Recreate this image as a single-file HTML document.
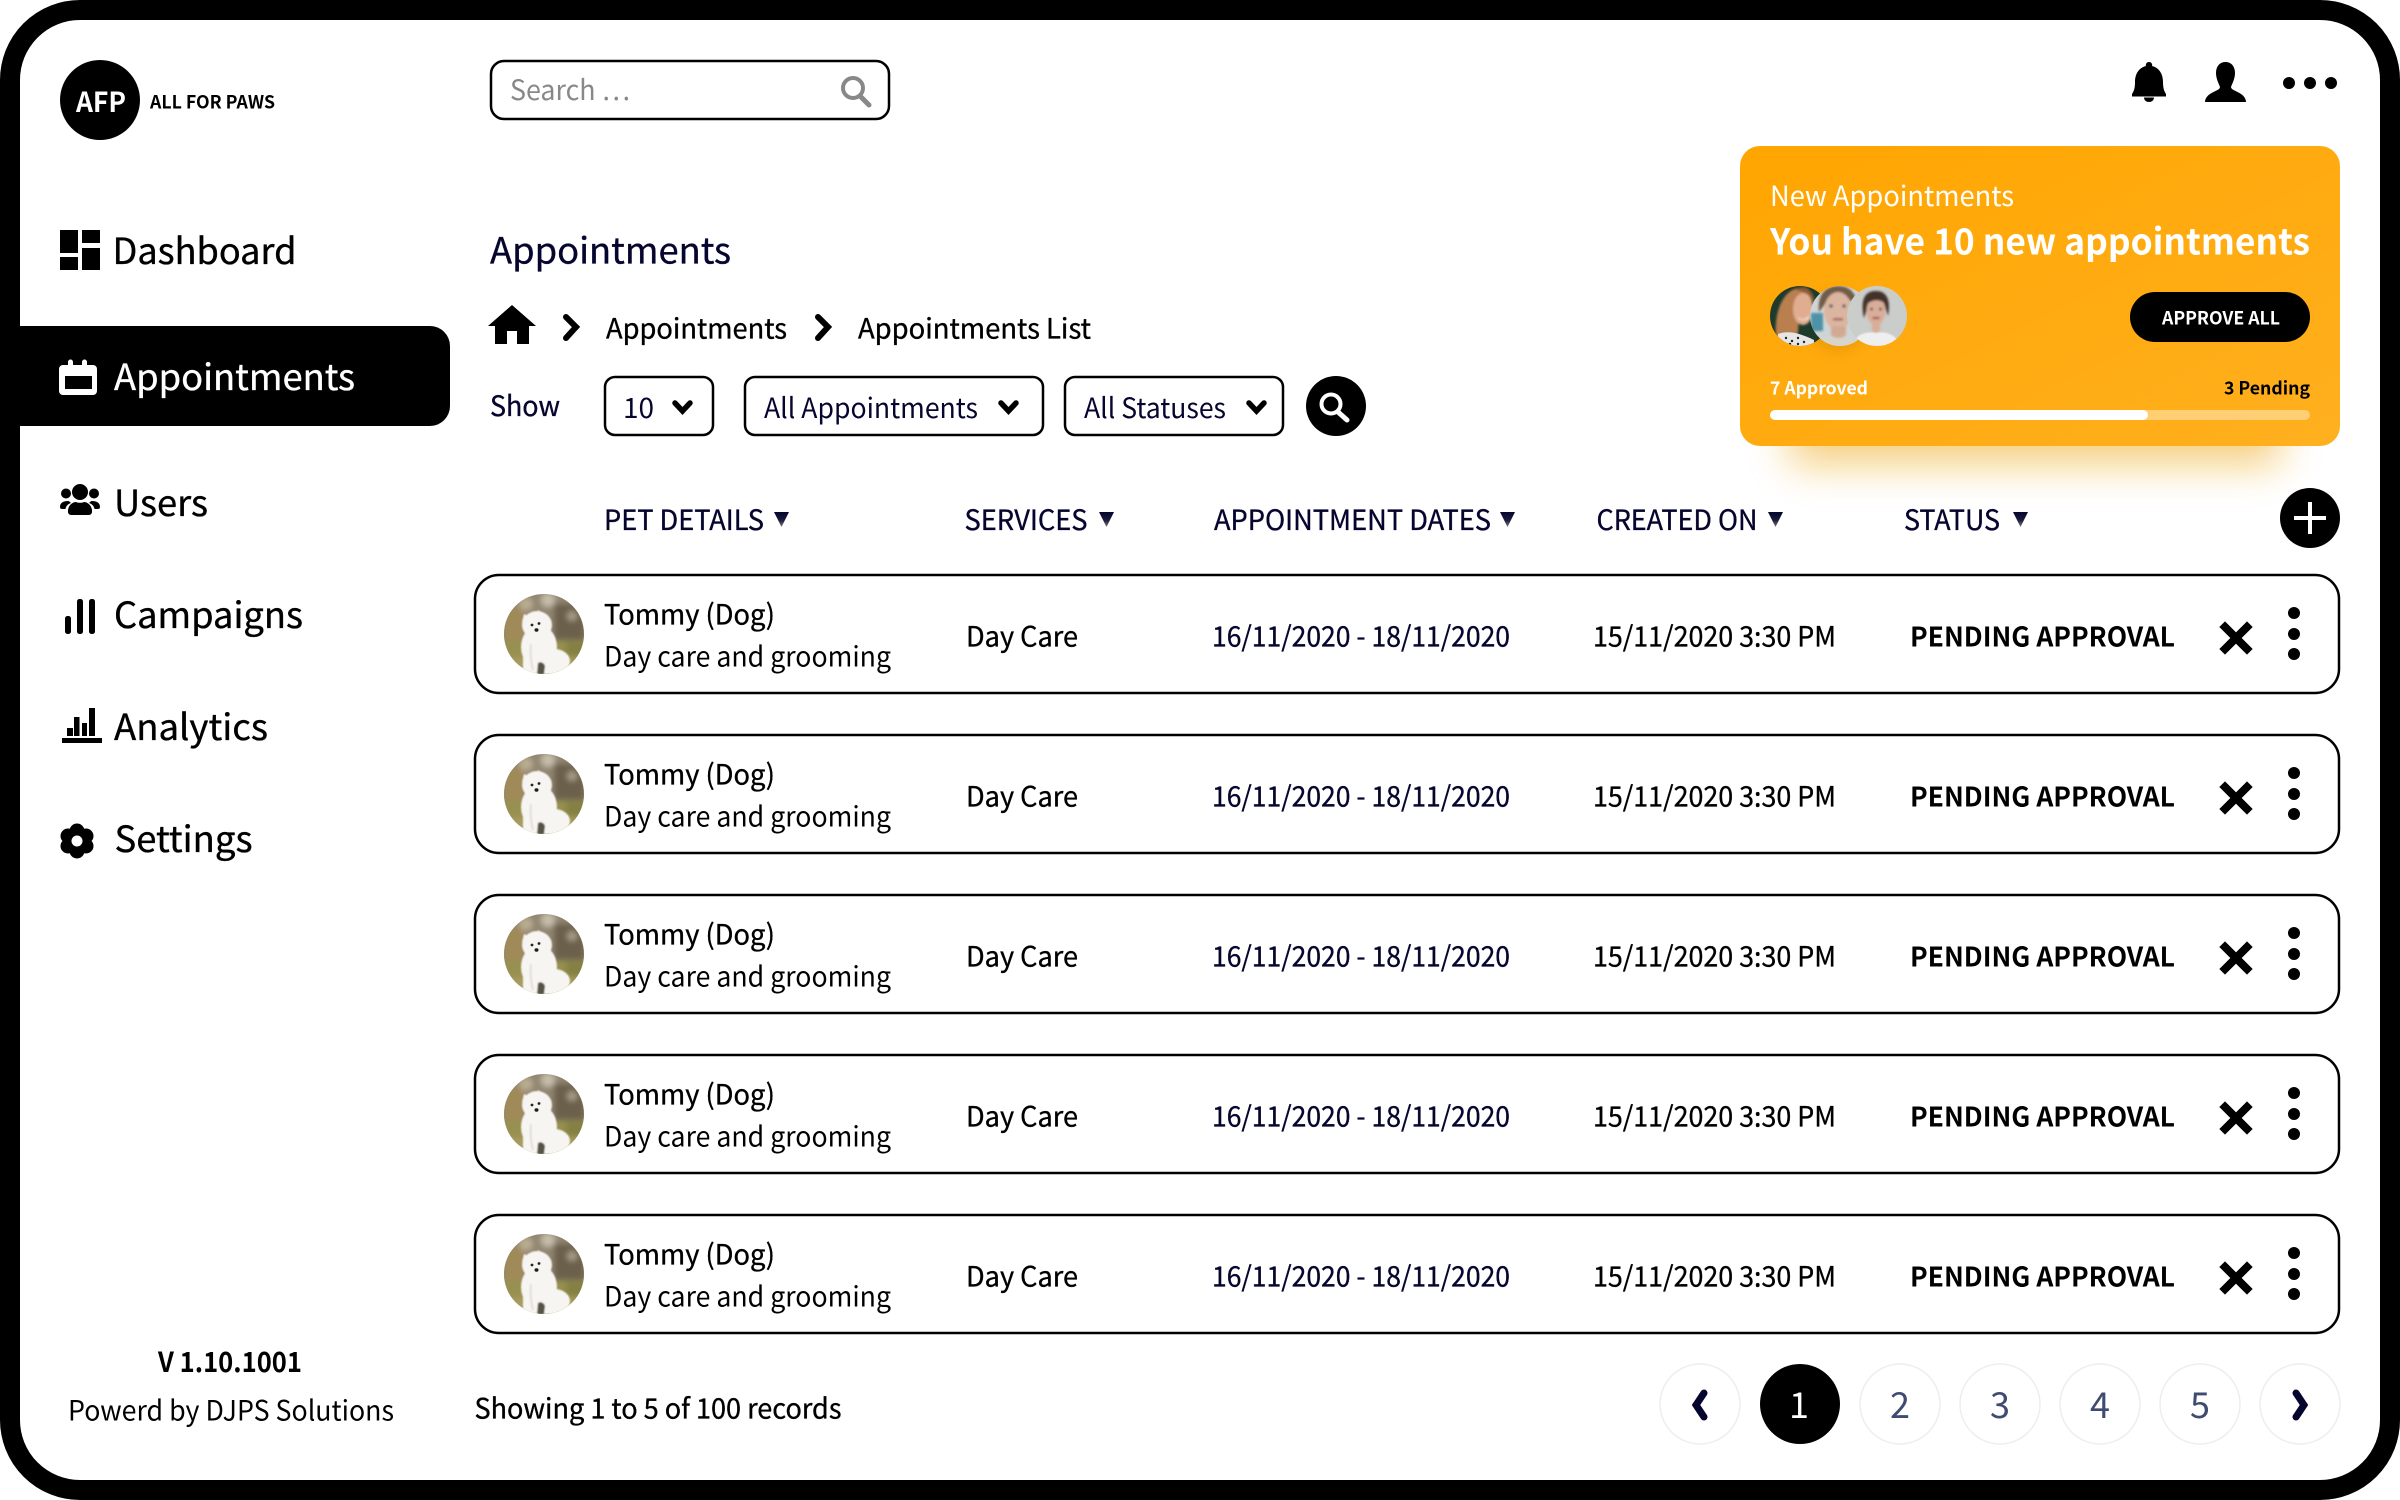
<!DOCTYPE html>
<html><head><meta charset="utf-8"><title>Appointments</title>
<style>
html,body{margin:0;padding:0;background:#fff;width:2400px;height:1500px;overflow:hidden}
svg{display:block}
text{font-family:"Noto Sans CJK JP","Liberation Sans",sans-serif;font-size:28px;white-space:pre}
.n{fill:#05052e}.k{fill:#000}.w{fill:#fff}
.b{font-weight:700}
.h{stroke-width:.35px}
.k.h{stroke:#000}.n.h{stroke:#05052e}.w.h{stroke:#fff}
.s36{font-size:36px}
</style></head><body>
<svg xmlns="http://www.w3.org/2000/svg" width="2400" height="1500" viewBox="0 0 2400 1500">
<defs>
<linearGradient id="card" x1="0" y1="0" x2="1" y2="1"><stop offset="0" stop-color="#ffa500"/><stop offset="1" stop-color="#ffb01f"/></linearGradient>
<linearGradient id="tri" x1="0" y1="0" x2="0" y2="1"><stop offset="0" stop-color="#05052e"/><stop offset=".55" stop-color="#1c1c3c"/><stop offset="1" stop-color="#777"/></linearGradient>
<filter id="b22" x="-30%" y="-50%" width="160%" height="200%"><feGaussianBlur stdDeviation="20"/></filter>
<filter id="b3" x="-30%" y="-30%" width="160%" height="160%"><feGaussianBlur stdDeviation="3"/></filter>
<filter id="b1" x="-30%" y="-30%" width="160%" height="160%"><feGaussianBlur stdDeviation="1.100"/></filter>
<filter id="b05" x="-30%" y="-30%" width="160%" height="160%"><feGaussianBlur stdDeviation=".7"/></filter>
<filter id="ds" x="-40%" y="-40%" width="180%" height="180%"><feGaussianBlur stdDeviation="6"/></filter>
<clipPath id="c80"><circle cx="40" cy="40" r="40"/></clipPath>
<clipPath id="c30"><circle cx="30" cy="30" r="30"/></clipPath>
<g id="dog"><g clip-path="url(#c80)">
<rect width="80" height="80" fill="#8f8568"/>
<g filter="url(#b3)">
<rect width="80" height="46" fill="#918570"/>
<rect x="50" y="10" width="30" height="36" fill="#6a604c"/>
<rect x="0" y="14" width="20" height="34" fill="#a08a58"/>
<circle cx="44" cy="6" r="7" fill="#c6bdab"/><circle cx="22" cy="10" r="7" fill="#b9ab90"/><circle cx="68" cy="22" r="5" fill="#a89f8b"/>
<rect y="47" width="80" height="36" fill="#97914f"/>
<rect x="0" y="64" width="80" height="18" fill="#a89c62"/>
<rect x="62" y="48" width="18" height="14" fill="#84803f"/>
</g>
<g filter="url(#b05)" fill="#f7f5f2">
<ellipse cx="33" cy="31" rx="15" ry="14"/>
<path d="M18 28 L20 20 L27 23Z"/><path d="M30 20 L35 16 L39 24Z"/>
<ellipse cx="35" cy="53" rx="18" ry="22"/>
<ellipse cx="50" cy="67" rx="16" ry="12"/>
<rect x="19" y="60" width="15" height="20"/>
<rect x="38" y="66" width="14" height="14"/>
<path d="M34 69 C37 67 40 69 41 72 L40 80 L33 80Z" fill="#575249"/>
<path d="M27 50 C26 58 27 68 29 76" stroke="#e2ded8" stroke-width="2" fill="none"/>
</g>
<circle cx="28" cy="31" r="1.400" fill="#222"/><circle cx="35" cy="29.500" r="1.400" fill="#222"/><ellipse cx="32.500" cy="36" rx="2" ry="1.700" fill="#1a1a1a"/>
</g></g>
</defs>

<rect width="2400" height="1500" fill="#fff"/>
<rect x="10" y="10" width="2380" height="1480" rx="70" ry="70" fill="#fff" stroke="#000" stroke-width="20"/>

<!-- logo -->
<circle cx="100" cy="100" r="40" fill="#000"/>
<text x="76" y="112" class="w b" textLength="50" lengthAdjust="spacingAndGlyphs">AFP</text>
<text x="150" y="108.500" class="k b" style="font-size:18px" textLength="125" lengthAdjust="spacingAndGlyphs">ALL FOR PAWS</text>

<!-- sidebar -->
<g fill="#000">
<rect x="60" y="230" width="18" height="23"/><rect x="60" y="257" width="18" height="13"/><rect x="82" y="230" width="18" height="13"/><rect x="82" y="248" width="18" height="22"/>
</g>
<text x="112.500" y="264" class="k h s36" textLength="184" lengthAdjust="spacingAndGlyphs">Dashboard</text>

<path d="M20 326 H430 A20 20 0 0 1 450 346 V406 A20 20 0 0 1 430 426 H20Z" fill="#000"/>
<path d="M63 365 H68 V362 A2.500 2.500 0 0 1 73 362 V365 H82 V362 A2.500 2.500 0 0 1 87 362 V365 H93 A4 4 0 0 1 97 369 V391 A4 4 0 0 1 93 395 H63 A4 4 0 0 1 59 391 V369 A4 4 0 0 1 63 365Z M65 376 V389 H92 V376Z" fill="#fff" fill-rule="evenodd"/>
<text x="114" y="390" class="w h s36" textLength="241" lengthAdjust="spacingAndGlyphs">Appointments</text>

<g fill="#000">
<circle cx="80" cy="492" r="8"/><circle cx="66" cy="493.500" r="5"/><circle cx="94" cy="493.500" r="5"/>
<path d="M68 511 C68 505 73 502 76 502 C78 503 82 503 84 502 C87 502 92 505 92 511 V512 A3 3 0 0 1 89 515 H71 A3 3 0 0 1 68 512Z"/>
<path d="M60 507 C60 503 63 501 68 501 C69 501 70 502 71 503 C68 504 66 506 65.500 509 H62 A2 2 0 0 1 60 507Z"/>
<path d="M100 507 C100 503 97 501 92 501 C91 501 90 502 89 503 C92 504 94 506 94.500 509 H98 A2 2 0 0 0 100 507Z"/>
</g>
<text x="114" y="516" class="k h s36" textLength="94" lengthAdjust="spacingAndGlyphs">Users</text>

<g fill="#000"><rect x="65" y="616" width="6" height="18" rx="2.500"/><rect x="77" y="599" width="6" height="35" rx="2.500"/><rect x="89" y="599" width="6" height="35" rx="2.500"/></g>
<text x="114" y="628" class="k h s36" textLength="189" lengthAdjust="spacingAndGlyphs">Campaigns</text>

<g fill="#000"><rect x="62" y="738" width="40" height="5"/><rect x="67" y="728" width="6" height="8"/><rect x="74" y="717" width="5.500" height="19"/><rect x="82" y="723" width="5" height="13"/><rect x="89" y="708" width="6" height="28"/></g>
<text x="114" y="740" class="k h s36" textLength="154" lengthAdjust="spacingAndGlyphs">Analytics</text>

<g fill="#000"><circle cx="77" cy="841" r="13"/><circle cx="77" cy="831" r="7.500"/><circle cx="86" cy="836" r="7.500"/><circle cx="86" cy="846" r="7.500"/><circle cx="77" cy="851" r="7.500"/><circle cx="68" cy="846" r="7.500"/><circle cx="68" cy="836" r="7.500"/></g>
<circle cx="77" cy="841" r="5.500" fill="#fff"/>
<text x="114.500" y="852" class="k h s36" textLength="138" lengthAdjust="spacingAndGlyphs">Settings</text>

<text x="158" y="1372" class="k b" textLength="144" lengthAdjust="spacingAndGlyphs">V 1.10.1001</text>
<text x="68" y="1420.500" class="k" textLength="326" lengthAdjust="spacingAndGlyphs">Powerd by DJPS Solutions</text>

<!-- search -->
<rect x="491" y="61" width="398" height="58" rx="13" fill="#fff" stroke="#000" stroke-width="2.500"/>
<text x="510" y="100" fill="#888" textLength="120" lengthAdjust="spacingAndGlyphs">Search …</text>
<circle cx="853" cy="88" r="10" fill="none" stroke="#888" stroke-width="4"/>
<path d="M860 96 L869 105" stroke="#888" stroke-width="5" stroke-linecap="round"/>

<!-- title -->
<text x="490" y="263.500" class="n h s36" textLength="241" lengthAdjust="spacingAndGlyphs">Appointments</text>
<path d="M512 305 L536 326 H529 V344 H517 V331 H507 V344 H495 V326 H488Z" fill="#000"/>
<path d="M566 317 L576 327 L566 338" fill="none" stroke="#000" stroke-width="6" stroke-linecap="round" stroke-linejoin="miter"/>
<text x="606" y="338.500" class="k h" textLength="181" lengthAdjust="spacingAndGlyphs">Appointments</text>
<path d="M818 317 L828 327 L818 338" fill="none" stroke="#000" stroke-width="6" stroke-linecap="round"/>
<text x="858" y="338.500" class="k h" textLength="233" lengthAdjust="spacingAndGlyphs">Appointments List</text>

<!-- filters -->
<text x="490" y="416" class="n h" textLength="70" lengthAdjust="spacingAndGlyphs">Show</text>
<g fill="#fff" stroke="#000" stroke-width="2.500">
<rect x="605" y="377" width="108" height="58" rx="10"/>
<rect x="745" y="377" width="298" height="58" rx="10"/>
<rect x="1065" y="377" width="218" height="58" rx="10"/>
</g>
<text x="623" y="418" class="n">10</text>
<text x="764" y="418" class="n" textLength="214" lengthAdjust="spacingAndGlyphs">All Appointments</text>
<text x="1084" y="418" class="n" textLength="142" lengthAdjust="spacingAndGlyphs">All Statuses</text>
<g fill="none" stroke="#000" stroke-width="5.500" stroke-linecap="round" stroke-linejoin="miter">
<path d="M675 403 L682.500 411 L690 403"/><path d="M1001 403 L1008.500 411 L1016 403"/><path d="M1249 403 L1256.500 411 L1264 403"/>
</g>
<circle cx="1336" cy="406" r="30" fill="#000"/>
<circle cx="1331" cy="404" r="9.500" fill="none" stroke="#fff" stroke-width="4"/>
<path d="M1338 412 L1347 420" stroke="#fff" stroke-width="5" stroke-linecap="round"/>

<!-- top icons -->
<path d="M2149 62 A3 3 0 0 1 2152 66 C2160 68 2163 75 2163 82 C2163 88 2164 91 2166 94 V96.500 H2132 V94 C2134 91 2135 88 2135 82 C2135 75 2138 68 2146 66 A3 3 0 0 1 2149 62Z M2144 97.500 H2154 C2154 100 2152 102 2149 102 C2146 102 2144 100 2144 97.500Z" fill="#000"/>
<path d="M2225.500 62 C2231 62 2235 66 2235 73 C2235 79 2232 84 2231 87 C2231 90 2237 91 2241 94 C2244 96 2246 99 2246 102 H2205 C2205 99 2207 96 2210 94 C2214 91 2220 90 2220 87 C2219 84 2216 79 2216 73 C2216 66 2220 62 2225.500 62Z" fill="#000"/>
<g fill="#000"><circle cx="2289" cy="83" r="6"/><circle cx="2310" cy="83" r="6"/><circle cx="2331" cy="83" r="6"/></g>

<!-- card -->
<rect x="1790" y="330" width="490" height="134" fill="#eda50f" opacity=".55" filter="url(#b22)"/>
<rect x="1740" y="146" width="600" height="300" rx="20" fill="url(#card)"/>
<text x="1770" y="206" class="w" textLength="244" lengthAdjust="spacingAndGlyphs">New Appointments</text>
<text x="1770" y="254.500" class="w b s36" textLength="540" lengthAdjust="spacingAndGlyphs">You have 10 new appointments</text>
<circle cx="1838" cy="322" r="30" fill="#d98a00" opacity=".45" filter="url(#ds)"/>
<g transform="translate(1770,286)"><g clip-path="url(#c30)">
<rect width="60" height="60" fill="#1d3a2a"/>
<g filter="url(#b1)">
<path d="M7 55 C3 38 8 6 28 2 C38 0 42 5 42 12 L30 20 L28 46 L24 56Z" fill="#b97f4f"/>
<ellipse cx="33" cy="23" rx="10" ry="16" fill="#e0ad90"/>
<path d="M24 3 C34 -1 46 4 44 18 L38 8Z" fill="#8a5a35"/>
<path d="M27 30 Q33 37 40 29 L38 33 Q33 35 29 33Z" fill="#f6eee8"/>
</g>
<path d="M8 48 C18 44 30 47 44 54 L44 60 H8Z" fill="#e6e6e6"/>
<g fill="#222"><circle cx="16" cy="52" r="1.200"/><circle cx="22" cy="55" r="1.200"/><circle cx="28" cy="52" r="1.200"/><circle cx="34" cy="56" r="1.200"/><circle cx="20" cy="58" r="1.200"/><circle cx="28" cy="58" r="1.200"/></g>
</g></g>
<g transform="translate(1810,286)"><g clip-path="url(#c30)">
<rect width="60" height="60" fill="#cfd4d4"/>
<g filter="url(#b1)">
<rect x="1" y="27" width="12" height="18" fill="#4d93a8"/>
<path d="M9 26 C7 6 18 0 28 0 C42 0 48 10 47 24 L40 14 L18 14Z" fill="#6f5c47"/>
<ellipse cx="28" cy="25" rx="14" ry="19" fill="#dcb5a0"/>
<path d="M8 60 C12 48 44 48 48 60Z" fill="#d8d4ca"/>
<path d="M21 40 H36 V49 C32 53 25 53 21 49Z" fill="#d2aa94"/>
<rect x="23" y="32" width="10" height="2.500" fill="#a8675f"/>
<circle cx="21" cy="20" r="1.800" fill="#54606c"/><circle cx="34" cy="20" r="1.800" fill="#54606c"/>
</g>
</g></g>
<g transform="translate(1847,286)"><g clip-path="url(#c30)">
<rect width="60" height="60" fill="#cbcdca"/>
<g filter="url(#b1)">
<path d="M17 32 C12 8 22 5 29 5 C40 5 44 14 41 30 L37 18 L22 18Z" fill="#43322c"/>
<ellipse cx="29" cy="25" rx="9.500" ry="14" fill="#d8ad99"/>
<path d="M20 15 C24 9 35 9 39 18 C33 13 26 13 20 18Z" fill="#43322c"/>
<path d="M25 36 H33 V45 L29 48 L25 45Z" fill="#d8ad99"/>
<rect x="25.500" y="31" width="7" height="2" fill="#a0403f"/>
<circle cx="24.500" cy="23" r="1.300" fill="#333"/><circle cx="33.500" cy="23" r="1.300" fill="#333"/>
</g>
<path d="M5 60 C8 47 22 45 29 47 C36 45 50 47 53 60Z" fill="#efefef" filter="url(#b05)"/>
</g></g>
<rect x="2130" y="292" width="180" height="50" rx="25" fill="#000"/>
<text x="2162" y="324.500" class="w b" style="font-size:18px" textLength="118" lengthAdjust="spacingAndGlyphs">APPROVE ALL</text>
<text x="1770" y="394.500" class="w b" style="font-size:18px" textLength="98" lengthAdjust="spacingAndGlyphs">7 Approved</text>
<text x="2224" y="394.500" class="k b" style="font-size:18px" textLength="86" lengthAdjust="spacingAndGlyphs">3 Pending</text>
<rect x="1770" y="410" width="540" height="10" rx="5" fill="#fff" opacity=".4"/>
<rect x="1770" y="410" width="378" height="10" rx="5" fill="#fff"/>

<!-- header -->
<text x="604" y="530" class="n h" textLength="160" lengthAdjust="spacingAndGlyphs">PET DETAILS</text><polygon points="774,512 789,512 781.500,527" fill="url(#tri)"/>
<text x="964.500" y="530" class="n h" textLength="123" lengthAdjust="spacingAndGlyphs">SERVICES</text><polygon points="1099,512 1114,512 1106.500,527" fill="url(#tri)"/>
<text x="1214" y="530" class="n h" textLength="277" lengthAdjust="spacingAndGlyphs">APPOINTMENT DATES</text><polygon points="1500,512 1515,512 1507.500,527" fill="url(#tri)"/>
<text x="1596.500" y="530" class="n h" textLength="161" lengthAdjust="spacingAndGlyphs">CREATED ON</text><polygon points="1768,512 1783,512 1775.500,527" fill="url(#tri)"/>
<text x="1904" y="530" class="n h" textLength="96" lengthAdjust="spacingAndGlyphs">STATUS</text><polygon points="2013,512 2028,512 2020.500,527" fill="url(#tri)"/>
<circle cx="2310" cy="518" r="30" fill="#000"/>
<path d="M2294 518 H2326 M2310 502 V534" stroke="#fff" stroke-width="4"/>

<!-- rows -->
<g transform="translate(0,0)">
<rect x="475" y="575" width="1864" height="118" rx="24" fill="#fff" stroke="#000" stroke-width="2.500"/>
<use href="#dog" x="504" y="594"/>
<text x="604" y="624.500" class="k h" textLength="171" lengthAdjust="spacingAndGlyphs">Tommy (Dog)</text><text x="604" y="666.500" class="k" textLength="287" lengthAdjust="spacingAndGlyphs">Day care and grooming</text>
<text x="966" y="646.500" class="k h" textLength="112" lengthAdjust="spacingAndGlyphs">Day Care</text><text x="1212" y="646.500" class="n h" textLength="298" lengthAdjust="spacingAndGlyphs">16/11/2020 - 18/11/2020</text><text x="1593" y="646.500" class="k h" textLength="243" lengthAdjust="spacingAndGlyphs">15/11/2020 3:30 PM</text><text x="1910" y="646.500" class="k b" style="font-size:27px" textLength="265" lengthAdjust="spacingAndGlyphs">PENDING APPROVAL</text>
<path d="M2225 627 L2247 649 M2247 627 L2225 649" stroke="#000" stroke-width="8" stroke-linecap="square"/>
<circle cx="2294" cy="613" r="6"/><circle cx="2294" cy="634" r="6"/><circle cx="2294" cy="654" r="6"/>
</g>
<g transform="translate(0,160)">
<rect x="475" y="575" width="1864" height="118" rx="24" fill="#fff" stroke="#000" stroke-width="2.500"/>
<use href="#dog" x="504" y="594"/>
<text x="604" y="624.500" class="k h" textLength="171" lengthAdjust="spacingAndGlyphs">Tommy (Dog)</text><text x="604" y="666.500" class="k" textLength="287" lengthAdjust="spacingAndGlyphs">Day care and grooming</text>
<text x="966" y="646.500" class="k h" textLength="112" lengthAdjust="spacingAndGlyphs">Day Care</text><text x="1212" y="646.500" class="n h" textLength="298" lengthAdjust="spacingAndGlyphs">16/11/2020 - 18/11/2020</text><text x="1593" y="646.500" class="k h" textLength="243" lengthAdjust="spacingAndGlyphs">15/11/2020 3:30 PM</text><text x="1910" y="646.500" class="k b" style="font-size:27px" textLength="265" lengthAdjust="spacingAndGlyphs">PENDING APPROVAL</text>
<path d="M2225 627 L2247 649 M2247 627 L2225 649" stroke="#000" stroke-width="8" stroke-linecap="square"/>
<circle cx="2294" cy="613" r="6"/><circle cx="2294" cy="634" r="6"/><circle cx="2294" cy="654" r="6"/>
</g>
<g transform="translate(0,320)">
<rect x="475" y="575" width="1864" height="118" rx="24" fill="#fff" stroke="#000" stroke-width="2.500"/>
<use href="#dog" x="504" y="594"/>
<text x="604" y="624.500" class="k h" textLength="171" lengthAdjust="spacingAndGlyphs">Tommy (Dog)</text><text x="604" y="666.500" class="k" textLength="287" lengthAdjust="spacingAndGlyphs">Day care and grooming</text>
<text x="966" y="646.500" class="k h" textLength="112" lengthAdjust="spacingAndGlyphs">Day Care</text><text x="1212" y="646.500" class="n h" textLength="298" lengthAdjust="spacingAndGlyphs">16/11/2020 - 18/11/2020</text><text x="1593" y="646.500" class="k h" textLength="243" lengthAdjust="spacingAndGlyphs">15/11/2020 3:30 PM</text><text x="1910" y="646.500" class="k b" style="font-size:27px" textLength="265" lengthAdjust="spacingAndGlyphs">PENDING APPROVAL</text>
<path d="M2225 627 L2247 649 M2247 627 L2225 649" stroke="#000" stroke-width="8" stroke-linecap="square"/>
<circle cx="2294" cy="613" r="6"/><circle cx="2294" cy="634" r="6"/><circle cx="2294" cy="654" r="6"/>
</g>
<g transform="translate(0,480)">
<rect x="475" y="575" width="1864" height="118" rx="24" fill="#fff" stroke="#000" stroke-width="2.500"/>
<use href="#dog" x="504" y="594"/>
<text x="604" y="624.500" class="k h" textLength="171" lengthAdjust="spacingAndGlyphs">Tommy (Dog)</text><text x="604" y="666.500" class="k" textLength="287" lengthAdjust="spacingAndGlyphs">Day care and grooming</text>
<text x="966" y="646.500" class="k h" textLength="112" lengthAdjust="spacingAndGlyphs">Day Care</text><text x="1212" y="646.500" class="n h" textLength="298" lengthAdjust="spacingAndGlyphs">16/11/2020 - 18/11/2020</text><text x="1593" y="646.500" class="k h" textLength="243" lengthAdjust="spacingAndGlyphs">15/11/2020 3:30 PM</text><text x="1910" y="646.500" class="k b" style="font-size:27px" textLength="265" lengthAdjust="spacingAndGlyphs">PENDING APPROVAL</text>
<path d="M2225 627 L2247 649 M2247 627 L2225 649" stroke="#000" stroke-width="8" stroke-linecap="square"/>
<circle cx="2294" cy="613" r="6"/><circle cx="2294" cy="634" r="6"/><circle cx="2294" cy="654" r="6"/>
</g>
<g transform="translate(0,640)">
<rect x="475" y="575" width="1864" height="118" rx="24" fill="#fff" stroke="#000" stroke-width="2.500"/>
<use href="#dog" x="504" y="594"/>
<text x="604" y="624.500" class="k h" textLength="171" lengthAdjust="spacingAndGlyphs">Tommy (Dog)</text><text x="604" y="666.500" class="k" textLength="287" lengthAdjust="spacingAndGlyphs">Day care and grooming</text>
<text x="966" y="646.500" class="k h" textLength="112" lengthAdjust="spacingAndGlyphs">Day Care</text><text x="1212" y="646.500" class="n h" textLength="298" lengthAdjust="spacingAndGlyphs">16/11/2020 - 18/11/2020</text><text x="1593" y="646.500" class="k h" textLength="243" lengthAdjust="spacingAndGlyphs">15/11/2020 3:30 PM</text><text x="1910" y="646.500" class="k b" style="font-size:27px" textLength="265" lengthAdjust="spacingAndGlyphs">PENDING APPROVAL</text>
<path d="M2225 627 L2247 649 M2247 627 L2225 649" stroke="#000" stroke-width="8" stroke-linecap="square"/>
<circle cx="2294" cy="613" r="6"/><circle cx="2294" cy="634" r="6"/><circle cx="2294" cy="654" r="6"/>
</g>

<!-- footer -->
<text x="474.500" y="1418.500" class="k h" textLength="367" lengthAdjust="spacingAndGlyphs">Showing 1 to 5 of 100 records</text>
<g fill="#fff" stroke="#eee" stroke-width="1.500">
<circle cx="1700" cy="1404" r="40"/><circle cx="1900" cy="1404" r="40"/><circle cx="2000" cy="1404" r="40"/><circle cx="2100" cy="1404" r="40"/><circle cx="2200" cy="1404" r="40"/><circle cx="2300" cy="1404" r="40"/>
</g>
<circle cx="1800" cy="1404" r="40" fill="#000"/>
<path d="M1704 1393 L1696 1405 L1704 1417" fill="none" stroke="#05052e" stroke-width="7" stroke-linecap="round"/>
<path d="M2296 1393 L2304 1405 L2296 1417" fill="none" stroke="#05052e" stroke-width="7" stroke-linecap="round"/>
<text x="1799" y="1418" text-anchor="middle" class="w" style="font-size:36px">1</text>
<text x="1900" y="1418" text-anchor="middle" fill="#3f4b70" style="font-size:36px">2</text>
<text x="2000" y="1418" text-anchor="middle" fill="#3f4b70" style="font-size:36px">3</text>
<text x="2100" y="1418" text-anchor="middle" fill="#3f4b70" style="font-size:36px">4</text>
<text x="2200" y="1418" text-anchor="middle" fill="#3f4b70" style="font-size:36px">5</text>
</svg>
</body></html>
